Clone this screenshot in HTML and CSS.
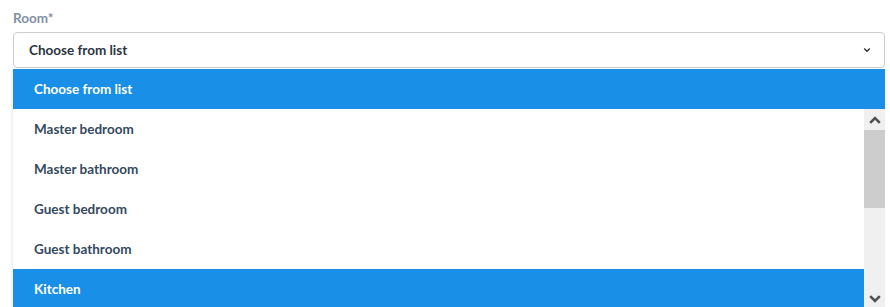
FILE: index.html
```html
<!DOCTYPE html>
<html>
<head>
<meta charset="utf-8">
<link rel="stylesheet" href="styles.css">
</head>
<body>
<div class="field">
  <label class="label">Room*</label>
  <div class="select">
    <span class="select-value">Choose from list</span>
    <svg class="chev" width="8" height="6" viewBox="0 0 8 6"><path d="M1.2 1.5 L4 4.3 L6.8 1.5" fill="none" stroke="#333" stroke-width="1.4"/></svg>
  </div>
  <div class="dropdown">
    <div class="option selected">Choose from list</div>
    <div class="list-wrap">
      <div class="list">
        <div class="option">Master bedroom</div>
        <div class="option">Master bathroom</div>
        <div class="option">Guest bedroom</div>
        <div class="option">Guest bathroom</div>
        <div class="option active">Kitchen</div>
      </div>
      <div class="scrollbar">
        <div class="sb-btn">
          <svg width="12" height="8" viewBox="0 0 12 8"><path d="M1.2 6.8 L6 2 L10.8 6.8" fill="none" stroke="#505050" stroke-width="2.6"/></svg>
        </div>
        <div class="sb-thumb"></div>
        <div class="sb-track"></div>
        <div class="sb-btn">
          <svg width="12" height="8" viewBox="0 0 12 8"><path d="M1.2 1.2 L6 6 L10.8 1.2" fill="none" stroke="#505050" stroke-width="2.6"/></svg>
        </div>
      </div>
    </div>
  </div>
</div>
</body>
</html>
```
FILE: styles.css
```css
html, body {
  margin: 0;
  padding: 0;
  background: #ffffff;
  overflow: hidden;
}
body {
  font-family: "Lato", "Liberation Sans", sans-serif;
  font-size: 13.5px;
  font-weight: 700;
  color: #34495e;
}
.field {
  padding: 10px 5px 0 13px;
}
.label {
  display: block;
  color: #8090a4;
  line-height: 16px;
  height: 22px;
}
.select {
  height: 34px;
  border: 1px solid #cccccc;
  border-radius: 4px;
  display: flex;
  align-items: center;
  justify-content: space-between;
  padding: 0 13px 0 15px;
  color: #2b3542;
}
.chev {
  display: block;
}
.dropdown {
  margin-top: 1px;
  box-shadow: -1px 1px 3px rgba(0,0,0,0.10);
  background: #fff;
}
.option {
  height: 40px;
  line-height: 40px;
  padding-left: 21px;
  color: #34495e;
  white-space: nowrap;
}
.option.selected, .option.active {
  background: #1a8fe8;
  color: #ffffff;
}
.list-wrap {
  display: flex;
  height: 200px;
}
.list {
  flex: 1;
}
.scrollbar {
  width: 21px;
  background: #f0f0f0;
  display: flex;
  flex-direction: column;
}
.sb-btn {
  height: 21px;
  display: flex;
  align-items: center;
  justify-content: center;
}
.sb-thumb {
  height: 78px;
  background: #cdcdcd;
}
.sb-track {
  flex: 1;
}
```
